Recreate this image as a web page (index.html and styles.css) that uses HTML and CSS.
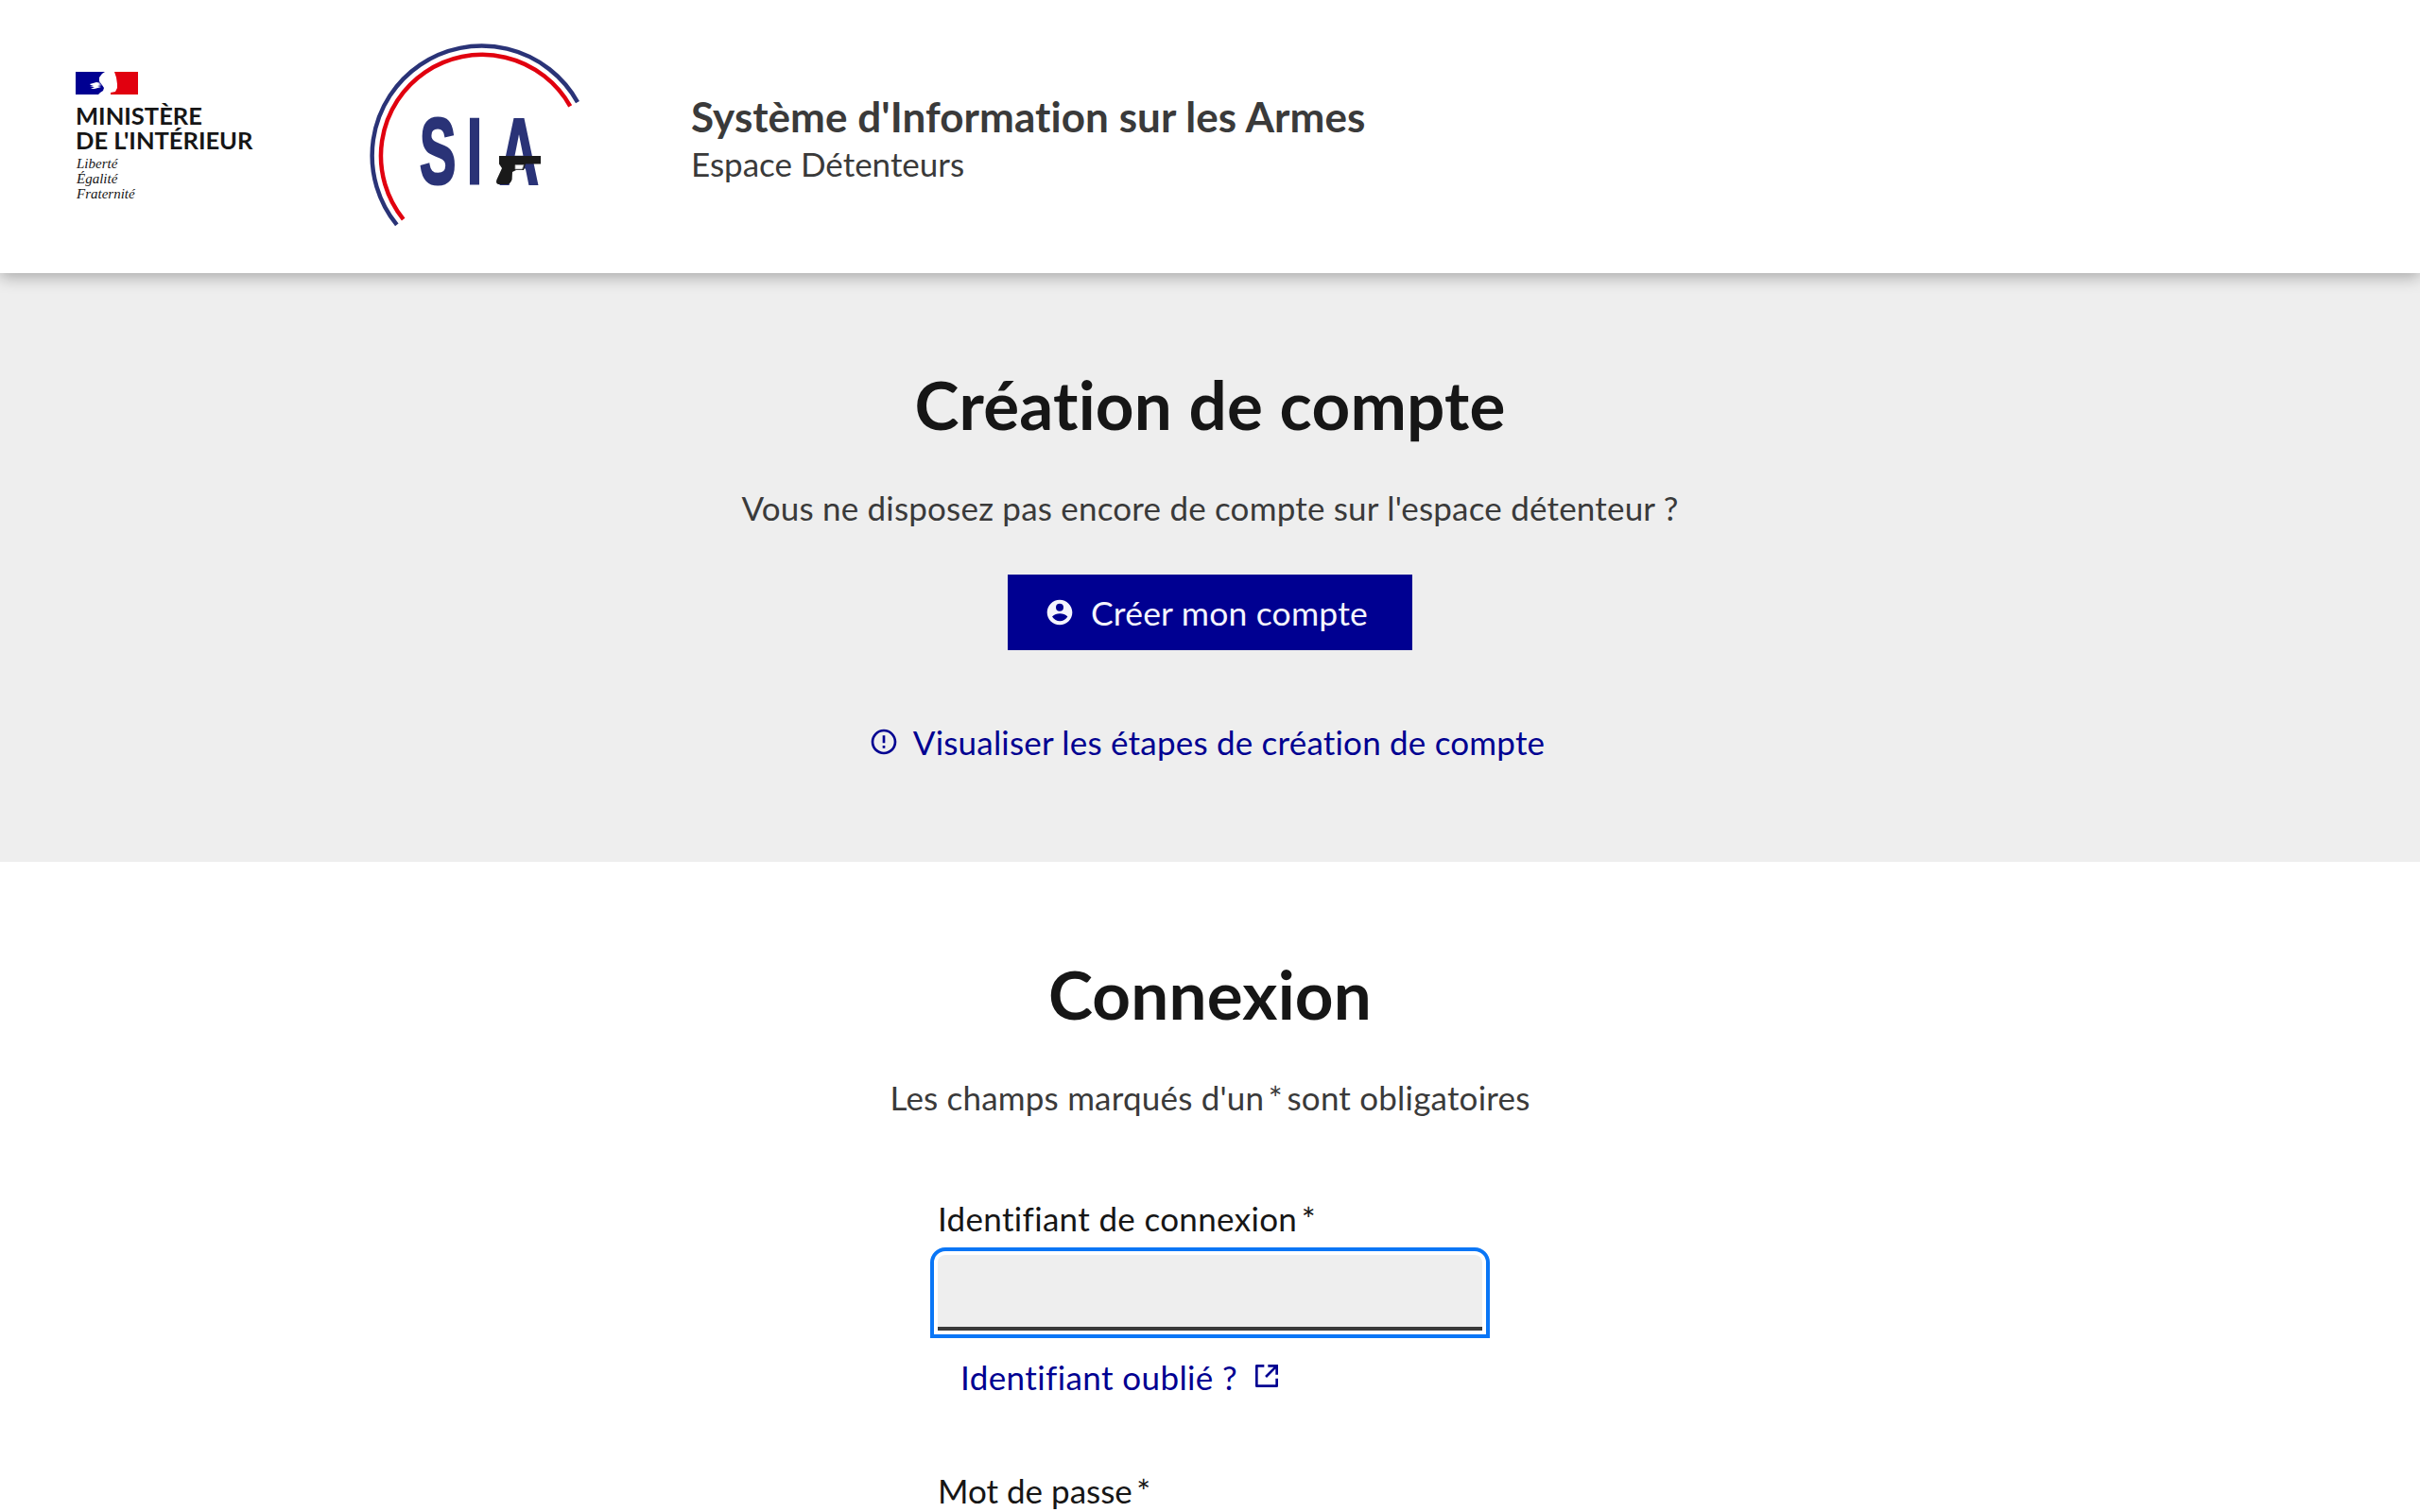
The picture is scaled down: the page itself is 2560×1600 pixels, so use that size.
FILE: index.html
```html
<!DOCTYPE html>
<html lang="fr">
<head>
<meta charset="UTF-8">
<meta name="viewport" content="width=device-width, initial-scale=1.0">
<title>Système d'Information sur les Armes - Espace Détenteurs</title>
<link rel="stylesheet" href="styles.css">
</head>
<body>
<header class="site-header">
    <div class="ministry">
        <svg class="ministry-flag" viewBox="0 0 66 24" aria-hidden="true">
            <rect width="66" height="24" fill="#fff"/>
            <path d="M0 0h31l-3 2-3 4 0 4 3 4 2 3-1 3-3 2-2 2H0z" fill="#000091"/>
            <path d="M41 0h25v24H37v-2l5-1 1-2 1-2 0-4-1-7z" fill="#e1000f"/>
            <path d="M15 13l7-2 5 1-3 1 4 1-5 1 4 1-7 2-4 0 4-2-5 0 4-1-3-1z" fill="#fff"/>
        </svg>
        <div class="ministry-name">MINISTÈRE<br>DE L'INTÉRIEUR</div>
        <div class="ministry-motto">Liberté<br>Égalité<br>Fraternité</div>
    </div>
    <svg class="sia-logo" viewBox="0 0 260 230" role="img" aria-label="SIA">
        <path d="M49.8 207.9A116 116 0 1 1 241 78.1" fill="none" stroke="#2a3377" stroke-width="4.5"/>
        <path d="M56.7 202.1A107 107 0 1 1 233.2 82.4" fill="none" stroke="#e1000f" stroke-width="4.5"/>
        <text class="sia-letters" transform="scale(.58 1)" x="127.6 214 273" y="164">SIA</text>
        <path d="M158 135H202V143.5H186L184 150H176L172 152 171.6 160Q170 165 166 165H157Q154 164 155.5 160L161 148 158 143.5Z" fill="#1a1a1a"/>
        <path d="M175 144.5h9l-1.5 4.5h-7.500z" fill="#fff" stroke="#999" stroke-width=".8"/>
    </svg>
    <div class="site-title">
        <p class="site-name">Système d'Information sur les Armes</p>
        <p class="site-sub">Espace Détenteurs</p>
    </div>
</header>

<section class="block block-grey">
    <h2>Création de compte</h2>
    <p class="lead">Vous ne disposez pas encore de compte sur l'espace détenteur ?</p>
    <a class="btn" href="#">
        <svg class="icon" viewBox="0 0 24 24"><path d="M12 2c5.52 0 10 4.48 10 10s-4.48 10-10 10S2 17.52 2 12 6.48 2 12 2zM6.023 15.416C7.491 17.606 9.695 19 12.16 19c2.464 0 4.669-1.393 6.136-3.584A8.968 8.968 0 0 0 12.16 13a8.968 8.968 0 0 0-6.137 2.416zM12 11a3 3 0 1 0 0-6 3 3 0 0 0 0 6z"/></svg>
        <span class="btn-label">Créer mon compte</span>
    </a>
    <a class="steps-link" href="#">
        <svg class="icon" viewBox="0 0 24 24"><path d="M12 22C6.477 22 2 17.523 2 12S6.477 2 12 2s10 4.477 10 10-4.477 10-10 10zm0-2a8 8 0 1 0 0-16 8 8 0 0 0 0 16zm-1-5h2v2h-2v-2zm0-8h2v6h-2V7z"/></svg>
        Visualiser les étapes de création de compte
    </a>
</section>

<section class="block block-login">
    <h2>Connexion</h2>
    <p class="lead">Les champs marqués d'un&#8201;*&#8201;sont obligatoires</p>
    <form class="login-form">
        <label class="label-username" for="username">Identifiant de connexion&#8201;*</label>
        <input type="text" id="username" name="username" class="field">
        <a class="forgot-link" href="#">
            Identifiant oublié ?
            <svg class="icon icon-external" viewBox="0 0 24 24"><path d="M10 3v2H5v14h14v-5h2v6a1 1 0 0 1-1 1H4a1 1 0 0 1-1-1V4a1 1 0 0 1 1-1h6Zm11 0v8h-2V6.413l-7 7.001L10.586 12l6.999-7H13V3h8Z"/></svg>
        </a>
        <label class="label-password" for="password">Mot de passe&#8201;*</label>
    </form>
</section>
</body>
</html>
```

FILE: styles.css
```css
/* Global styles */
html, body {
    height: 1600px;
    overflow: hidden;
}
body {
    margin: 0;
    font-family: Lato, "Noto Sans", sans-serif;
    font-size: 35px;
    line-height: 48px;
    font-variant-ligatures: none;
    letter-spacing: 0.2px;
    color: #3a3a3a;
    background-color: #fff;
}
a {
    color: #000091;
    text-decoration: none;
}
.icon {
    width: 32px;
    height: 32px;
    fill: currentColor;
    flex: none;
}

/* Header */
.site-header {
    position: relative;
    z-index: 1;
    display: flex;
    align-items: center;
    height: 289px;
    padding-left: 80px;
    background-color: #fff;
    box-shadow: 0 4px 16px rgba(0, 0, 0, 0.3);
}
.ministry {
    width: 290px;
    flex: none;
}
.ministry-flag {
    display: block;
    width: 66px;
    height: 24px;
    margin-bottom: 9px;
}
.ministry-name {
    font-size: 25.5px;
    line-height: 26px;
    font-weight: bold;
    letter-spacing: 0;
    color: #161616;
}
.ministry-motto {
    margin-top: 4px;
    padding-left: 1px;
    font-family: "Liberation Serif", serif;
    font-style: italic;
    font-size: 15px;
    line-height: 16px;
    letter-spacing: 0;
    color: #161616;
}
.sia-logo {
    width: 260px;
    height: 230px;
    flex: none;
}
.sia-letters {
    font-family: "Liberation Sans", sans-serif;
    font-weight: bold;
    font-size: 99px;
    letter-spacing: 0;
    fill: #2a3377;
    stroke: #2a3377;
    stroke-width: 3;
}
.site-title {
    margin-left: 101px;
}
.site-title p {
    margin: 0;
}
.site-name {
    font-size: 44px;
    line-height: 56px;
    font-weight: bold;
    letter-spacing: 0.06px;
}
.site-sub {
    font-size: 35px;
    line-height: 44px;
    letter-spacing: 0;
}

/* Sections */
.block {
    display: flex;
    flex-direction: column;
    align-items: center;
}
.block h2 {
    margin: 0;
    font-size: 71px;
    line-height: 80px;
    font-weight: bold;
    color: #161616;
}
.block-grey {
    height: 623px;
    padding-top: 99px;
    box-sizing: border-box;
    background-color: #eee;
}
.block-login {
    padding-top: 100px;
}
.lead {
    margin: 45px 0 0;
}
.btn {
    display: flex;
    align-items: center;
    justify-content: center;
    gap: 17px;
    width: 428px;
    height: 80px;
    margin-top: 47px;
    padding-right: 8px;
    box-sizing: border-box;
    font-size: 35.5px;
    color: #f5f5fe;
    background-color: #000091;
}
.btn-label {
    margin-top: 2px;
}
.steps-link {
    display: flex;
    align-items: center;
    gap: 15px;
    margin-top: 73px;
    padding-right: 7px;
}

/* Login form */
.login-form {
    display: flex;
    flex-direction: column;
    width: 576px;
    margin-top: 80px;
}
.login-form label {
    color: #161616;
}
.label-username {
    letter-spacing: 0.33px;
}
.field {
    display: block;
    height: 80px;
    margin-top: 15px;
    padding: 0 24px;
    box-sizing: border-box;
    background-color: #eee;
    border: 0;
    border-bottom: 4px solid #3a3a3a;
    border-radius: 8px 8px 0 0;
    outline: 4px solid #0a76f6;
    outline-offset: 4px;
}
.forgot-link {
    display: flex;
    align-items: center;
    gap: 15px;
    margin-top: 25px;
    padding-left: 24px;
    letter-spacing: 0.4px;
}
.icon-external {
    margin-top: -2px;
}
.label-password {
    margin-top: 72px;
    letter-spacing: 0;
}
```
